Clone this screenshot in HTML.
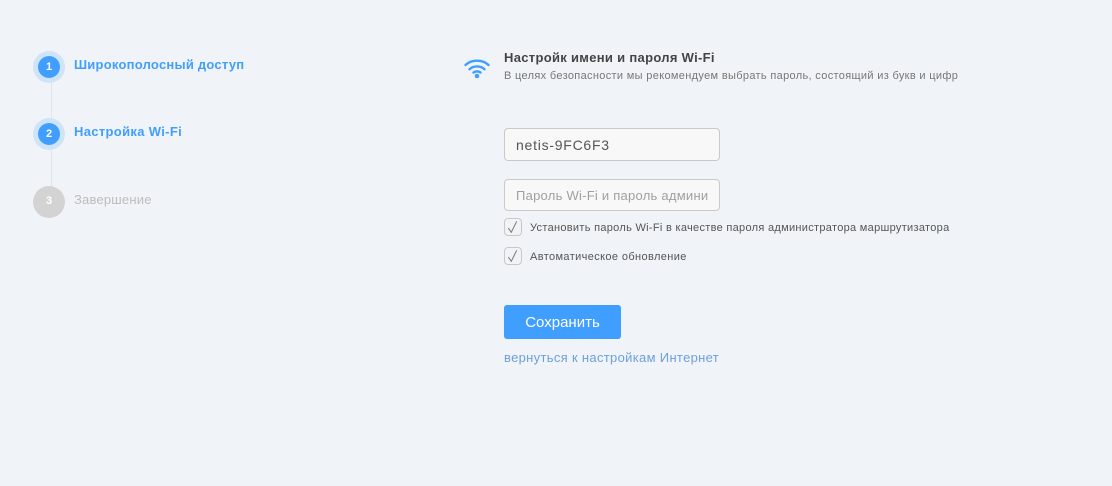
<!DOCTYPE html>
<html><head><meta charset="utf-8"><style>
html,body{margin:0;padding:0;width:1112px;height:486px;overflow:hidden;background:#f0f4f8;font-family:"Liberation Sans","DejaVu Sans",sans-serif}
.t{position:absolute;white-space:nowrap;line-height:16px}
.c{position:absolute;border-radius:50%;text-align:center;color:#fff;font-size:11px;font-weight:bold}
.l{position:absolute;left:51px;width:1px;background:#e1e6ea}
.i{position:absolute;left:504px;width:214px;box-sizing:content-box;border:1px solid #c9c9c9;border-radius:4px;background:#f8f8f8}
.k{position:absolute;left:504px;width:16px;height:16px;border:1px solid #c8c8c8;border-radius:4px;background:#f1f3f6}
</style></head><body>
<div class="l" style="top:80px;height:40px"></div>
<div class="l" style="top:148px;height:40px"></div>
<div class="c" style="left:33px;top:51px;width:32px;height:32px;background:#cfe4f9"></div>
<div class="c" style="left:38px;top:56px;width:22px;height:22px;line-height:22px;background:#409eff">1</div>
<div class="c" style="left:33px;top:118px;width:32px;height:32px;background:#cfe4f9"></div>
<div class="c" style="left:38px;top:123px;width:22px;height:22px;line-height:22px;background:#409eff">2</div>
<div class="c" style="left:33px;top:186px;width:32px;height:32px;line-height:31px;background:#d3d3d3">3</div>
<div class="t" style="left:74px;top:57px;font-size:13px;font-weight:bold;color:#409eff;letter-spacing:.24px">Широкополосный доступ</div>
<div class="t" style="left:74px;top:124px;font-size:13px;font-weight:bold;color:#409eff;letter-spacing:.33px">Настройка Wi-Fi</div>
<div class="t" style="left:74px;top:192px;font-size:13px;color:#bcbcbc;letter-spacing:.2px">Завершение</div>
<svg style="position:absolute;left:458px;top:50px" width="40" height="36" viewBox="0 0 40 36" fill="none" stroke="#409eff" stroke-width="2.4" stroke-linecap="round"><path d="M7.500 15C13.500 9.300 24.500 9.300 30.500 15"/><path d="M11.500 19.300C15.500 15.500 22.500 15.500 26.500 19.300"/><path d="M15.500 22.500C17.500 21 20.500 21 22.500 22.500"/><circle cx="19" cy="26" r="2.300" fill="#409eff" stroke="none"/></svg>
<div class="t" style="left:504px;top:50px;font-size:13px;font-weight:bold;color:#444;letter-spacing:.31px">Настройк имени и пароля Wi-Fi</div>
<div class="t" style="left:504px;top:68px;font-size:11px;color:#777;letter-spacing:.33px">В целях безопасности мы рекомендуем выбрать пароль, состоящий из букв и цифр</div>
<div class="i" style="top:128px;height:31px"></div>
<div class="t" style="left:516px;top:137px;font-size:14px;color:#555;letter-spacing:.75px">netis-9FC6F3</div>
<div class="i" style="top:179px;height:30px"></div>
<div class="t" style="left:516px;top:188px;width:192px;overflow:hidden;font-size:13px;color:#a0a0a0;letter-spacing:.25px">Пароль Wi-Fi и пароль админи</div>
<div class="k" style="top:218px"></div>
<svg style="position:absolute;left:504px;top:218px" width="18" height="18" fill="none" stroke="#777" stroke-width="1"><path d="M4.300 10L7.300 14.300L12.700 3.300"/></svg>
<div class="t" style="left:530px;top:220px;font-size:11px;color:#555;letter-spacing:.3px">Установить пароль Wi-Fi в качестве пароля администратора маршрутизатора</div>
<div class="k" style="top:247px"></div>
<svg style="position:absolute;left:504px;top:247px" width="18" height="18" fill="none" stroke="#777" stroke-width="1"><path d="M4.300 10L7.300 14.300L12.700 3.300"/></svg>
<div class="t" style="left:530px;top:249px;font-size:11px;color:#555;letter-spacing:.38px">Автоматическое обновление</div>
<div style="position:absolute;left:504px;top:305px;width:117px;height:34px;line-height:35px;border-radius:3px;background:#409eff;color:#fff;font-size:15px;text-align:center">Сохранить</div>
<div class="t" style="left:504px;top:350px;font-size:13px;color:#6d9fde;letter-spacing:.32px">вернуться к настройкам Интернет</div>
</body></html>
